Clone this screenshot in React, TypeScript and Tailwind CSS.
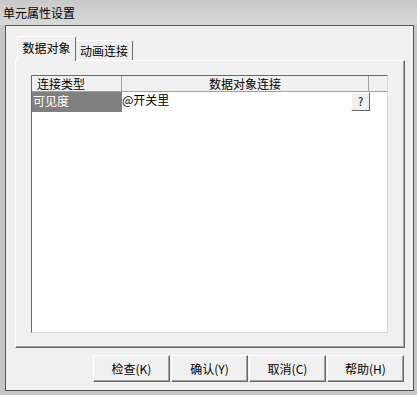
import React from 'react';

const font = "font-['Noto_Sans_CJK_SC','Noto_Sans_CJK_JP',sans-serif]";

const buttons = ['检查(K)', '确认(Y)', '取消(C)', '帮助(H)'];

const App: React.FC = () => {
  return (
    <div className={`w-[417px] h-[395px] flex flex-col bg-[#c6c6c6] text-[12px] text-black ${font}`}>
      {/* title bar */}
      <div className="h-[25px] flex items-center pl-[3px] bg-gradient-to-b from-[#c9c9c9] to-[#d9d9d9] shrink-0">
        <span className="leading-none">单元属性设置</span>
      </div>

      {/* client area */}
      <div className="ml-[5px] mr-[3px] mb-[4px] flex-1 border border-[#555] bg-[#f0f0f0] flex flex-col pl-[9px] pt-[10px]">
        {/* tabs */}
        <div className="h-[24px] flex items-end relative z-10">
          <div className="ml-[2px] w-[59px] h-[25px] mb-[-1px] bg-[#f0f0f0] border-l border-t border-r border-l-white border-t-white border-r-[#696969] rounded-t-[2px] flex items-center justify-center pb-[2px]">
            数据对象
          </div>
          <div className="w-[57px] h-[20px] border-t border-r border-t-white border-r-[#696969] rounded-tr-[2px] flex items-center justify-center">
            动画连接
          </div>
        </div>

        {/* tab panel */}
        <div className="w-[390px] h-[288px] border border-l-white border-t-white border-r-[#696969] border-b-[#696969] shadow-[inset_-1px_-1px_0_#a0a0a0] pl-[15px] pt-[14px]">
          <div className="w-[357px] h-[258px] bg-white border border-t-[#696969] border-l-[#696969] border-r-[#d8d8d8] border-b-[#d8d8d8] flex flex-col">
            {/* header */}
            <div className="h-[16px] flex bg-[#f0f0f0] border-b border-[#a0a0a0] shrink-0">
              <div className="w-[90px] border-r border-[#a0a0a0] pl-[5px] leading-[15px]">连接类型</div>
              <div className="w-[247px] border-r border-[#a0a0a0] text-center leading-[15px]">数据对象连接</div>
              <div className="flex-1" />
            </div>
            {/* row */}
            <div className="h-[20px] flex">
              <div className="w-[90px] bg-[#808080] text-white pl-[1px] leading-[16px] pt-[1px]">可见度</div>
              <div className="w-[247px] flex justify-between">
                <span className="leading-[14px] pt-[1px]">@开关里</span>
                <div className="w-[19px] h-[19px] bg-[#f0f0f0] border border-l-white border-t-white border-r-[#696969] border-b-[#696969] flex items-center justify-center text-[11px] leading-none mr-[-1px]">
                  ?
                </div>
              </div>
            </div>
          </div>
        </div>

        {/* buttons */}
        <div className="flex gap-[1px] ml-[78px] mt-[7px]">
          {buttons.map((b) => (
            <div
              key={b}
              className="w-[77px] h-[27px] border border-l-white border-t-white border-r-[#696969] border-b-[#696969] shadow-[inset_-1px_-1px_0_#a0a0a0] flex items-center justify-center"
            >
              {b}
            </div>
          ))}
        </div>
      </div>
    </div>
  );
};

export default App;
